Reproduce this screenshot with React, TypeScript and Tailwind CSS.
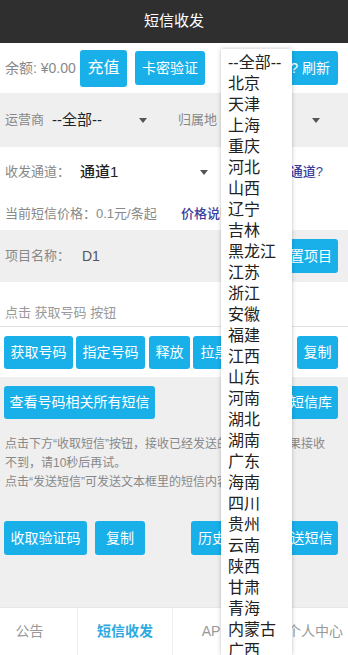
const provinces = [
  "--全部--", "北京", "天津", "上海", "重庆", "河北", "山西", "辽宁", "吉林", "黑龙江",
  "江苏", "浙江", "安徽", "福建", "江西", "山东", "河南", "湖北", "湖南", "广东",
  "海南", "四川", "贵州", "云南", "陕西", "甘肃", "青海", "内蒙古", "广西", "西藏",
  "宁夏", "新疆",
];

function Btn({ children, className = "" }: { children: React.ReactNode; className?: string }) {
  return (
    <button
      className={`flex items-center justify-center shrink-0 rounded-[3px] bg-[#19b0ea] text-white whitespace-nowrap overflow-hidden ${className}`}
    >
      {children}
    </button>
  );
}

function Caret() {
  return (
    <span className="w-0 h-0 border-l-[4px] border-r-[4px] border-t-[5px] border-l-transparent border-r-transparent border-t-[#555]" />
  );
}

export default function App() {
  return (
    <div className="relative w-[348px] h-[655px] overflow-hidden flex flex-col bg-[#efefef] font-['Liberation_Sans','Noto_Sans_CJK_SC',sans-serif]">
      {/* 顶部标题 */}
      <div className="h-[43px] shrink-0 bg-[#2f2f2f] flex items-center justify-center text-white text-[15px]">
        短信收发
      </div>

      {/* 余额 */}
      <div className="h-[50px] shrink-0 bg-white flex items-center pl-[5px] pr-[10px]">
        <span className="w-[75px] text-[14px] text-[#888]">余额: ¥0.00</span>
        <Btn className="w-[47px] h-[37px] text-[16px]">充值</Btn>
        <Btn className="ml-[8px] w-[70px] h-[34px] text-[14px]">卡密验证</Btn>
        <Btn className="ml-auto w-[100px] h-[34px] text-[14px] !justify-end pr-[8px]">帮助? 刷新</Btn>
      </div>

      {/* 运营商 / 归属地 */}
      <div className="h-[54px] shrink-0 flex items-center pl-[5px]">
        <span className="w-[47px] text-[13px] text-[#888]">运营商</span>
        <div className="w-[95px] flex items-center justify-between text-[15px] text-[#222]">
          <span>--全部--</span>
          <Caret />
        </div>
        <span className="ml-[31px] text-[13px] text-[#888]">归属地</span>
        <div className="ml-auto mr-[28px] flex items-center">
          <Caret />
        </div>
      </div>

      {/* 收发通道 */}
      <div className="h-[50px] shrink-0 bg-white flex items-center pl-[5px]">
        <span className="w-[75px] text-[13px] text-[#888]">收发通道：</span>
        <div className="w-[128px] flex items-center justify-between text-[15px] font-medium text-[#222]">
          <span>通道1</span>
          <Caret />
        </div>
        <span className="ml-auto mr-[25px] text-[13px] font-medium text-[#3b3d9e]">什么是通道?</span>
      </div>

      <div className="h-[33px] shrink-0 bg-white flex items-center pl-[5px]">
        <span className="w-[176px] text-[13px] text-[#888]">当前短信价格：0.1元/条起</span>
        <span className="text-[13px] font-medium text-[#3b3d9e]">价格说明</span>
      </div>

      {/* 项目名称 */}
      <div className="h-[52px] shrink-0 flex items-center pl-[5px] pr-[10px]">
        <span className="w-[77px] text-[13px] text-[#888]">项目名称：</span>
        <span className="text-[14px] text-[#555]">D1</span>
        <Btn className="ml-auto w-[68px] h-[34px] text-[14px]">设置项目</Btn>
      </div>

      {/* 号码 */}
      <div className="h-[45px] shrink-0 bg-white border-b border-[#e3e3e3] flex items-end pb-[4px] pl-[5px]">
        <span className="text-[13px] text-[#999]">点击 获取号码 按钮</span>
      </div>

      <div className="h-[50px] shrink-0 bg-white flex items-center pl-[4px] pr-[10px] text-[14px]">
        <Btn className="w-[69px] h-[33px]">获取号码</Btn>
        <Btn className="ml-[3px] w-[69px] h-[33px]">指定号码</Btn>
        <Btn className="ml-[4px] w-[41px] h-[33px]">释放</Btn>
        <Btn className="ml-[3px] w-[43px] h-[33px]">拉黑</Btn>
        <Btn className="ml-auto w-[41px] h-[33px]">复制</Btn>
      </div>

      <div className="h-[51px] shrink-0 flex items-start pt-[9px] pl-[4px] pr-[10px] text-[14px]">
        <Btn className="w-[151px] h-[33px]">查看号码相关所有短信</Btn>
        <Btn className="ml-auto w-[82px] h-[33px]">历史短信库</Btn>
      </div>

      {/* 说明 */}
      <div className="shrink-0 pt-[7px] px-[5px] text-[12px] leading-[19px] text-[#888]">
        <p>
          点击下方“收取短信”按钮，接收已经发送的验证码，如果接收
          <br />
          不到，请10秒后再试。
        </p>
        <p>点击“发送短信”可发送文本框里的短信内容。</p>
      </div>

      <div className="mt-[29px] h-[34px] shrink-0 flex items-center pl-[4px] pr-[10px] text-[14px]">
        <Btn className="w-[83px] h-[34px]">收取验证码</Btn>
        <Btn className="ml-[8px] w-[50px] h-[34px]">复制</Btn>
        <Btn className="ml-[46px] w-[70px] h-[34px]">历史记录</Btn>
        <Btn className="ml-auto w-[67px] h-[34px]">发送短信</Btn>
      </div>

      <div className="flex-1" />

      {/* 底部导航 */}
      <div className="h-[48px] shrink-0 bg-white border-t border-[#e8e8e8] flex ml-[-18px] text-[14px]">
        <div className="w-[95px] shrink-0 flex items-center justify-center text-[#999]">公告</div>
        <div className="w-[95px] shrink-0 flex items-center justify-center border-l border-[#eee] text-[#2ea8df] font-bold">
          短信收发
        </div>
        <div className="w-[95px] shrink-0 flex items-center justify-center pl-[14px] border-l border-[#eee] text-[#999]">API对接</div>
        <div className="w-[95px] shrink-0 flex items-center justify-center border-l border-[#eee] text-[#999]">个人中心</div>
      </div>

      {/* 归属地下拉列表 */}
      <div className="absolute top-[49px] left-[221px] w-[71px] bottom-0 overflow-hidden bg-white shadow-[0_0_4px_rgba(0,0,0,0.25)] pt-[3px]">
        {provinces.map((p) => (
          <div key={p} className="pl-[7px] text-[16px] leading-[21px] text-[#222] whitespace-nowrap">
            {p}
          </div>
        ))}
      </div>
    </div>
  );
}
